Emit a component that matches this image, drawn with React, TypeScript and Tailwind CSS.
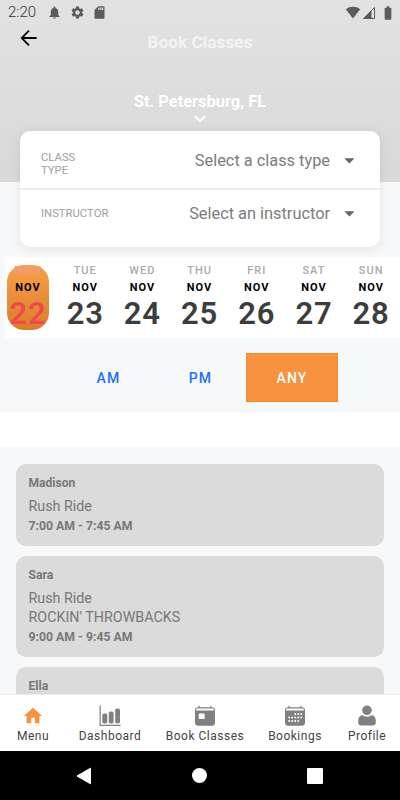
import React from "react";
import { MdNotifications, MdSettings, MdSdCard, MdBatteryFull, MdHome } from "react-icons/md";

const days = [
  ["MON", "22"],
  ["TUE", "23"],
  ["WED", "24"],
  ["THU", "25"],
  ["FRI", "26"],
  ["SAT", "27"],
  ["SUN", "28"],
];

const classes = [
  { who: "Madison", lines: ["Rush Ride"], time: "7:00 AM - 7:45 AM" },
  { who: "Sara", lines: ["Rush Ride", "ROCKIN' THROWBACKS"], time: "9:00 AM - 9:45 AM" },
  { who: "Ella", lines: [], time: "" },
];

function StatusBar() {
  return (
    <div className="flex h-[25px] items-center pl-[8px] pr-[4px] text-[#5b5b5b]">
      <span className="w-[38px] whitespace-nowrap text-[15px] font-light leading-[25px] text-[#333]">2:20</span>
      <MdNotifications className="ml-[1px] size-[15px]" />
      <MdSettings className="ml-[7.5px] size-[15px]" />
      <MdSdCard className="ml-[7.5px] size-[15px]" />
      <div className="ml-auto flex items-center">
        <svg className="h-[14px] w-[16px]" viewBox="0 0 16 14" fill="currentColor">
          <path d="M.8 3.300C4.600 0 11.400 0 15.200 3.300L8 12.500z" />
        </svg>
        <svg className="ml-[1px] h-[14px] w-[14px]" viewBox="0 0 14 14">
          <path d="M12.500 1.500v11h-11z" fill="none" stroke="#5b5b5b" />
          <path d="M9.500 4.500v8h-8z" fill="#5b5b5b" />
        </svg>
        <MdBatteryFull className="ml-[4px] size-[16px]" />
      </div>
    </div>
  );
}

function Field({ label, value, className }: { label: string; value: string; className: string }) {
  return (
    <div className={"flex items-start justify-between pl-[21px] pr-[24px] " + className}>
      <span className="text-[11.3px] leading-[13px] text-[#a0a0a0]">{label}</span>
      <span className="flex items-center text-[16.35px] leading-[20px] text-[#7c7c7c]">
        {value}
        <svg className="ml-[14px] h-[6px] w-[12px]" viewBox="0 0 12 6" fill="#666">
          <path d="M.3 .3h10.200L5.400 5.500z" />
        </svg>
      </span>
    </div>
  );
}

function StatsIcon() {
  return (
    <svg className="size-[22px]" viewBox="0 0 22 22" fill="#808080">
      <path d="M.5.5h1.200v19.200h19.800v1.200H.500z" />
      <rect x="3.300" y="8.500" width="5" height="10" rx="1.800" />
      <rect x="9.800" y="6.500" width="4.800" height="12" rx="1.800" />
      <rect x="16.200" y="3.500" width="4.800" height="15" rx="1.800" />
    </svg>
  );
}

function CalendarIcon({ dots }: { dots?: boolean }) {
  return (
    <svg className="size-[22px]" viewBox="0 0 22 22" fill="#808080">
      <path d="M4.500 .8h1.200v1.500h10.600V.8h1.200v1.500H18c1.700 0 3 1.200 3 2.800v1H1v-1c0-1.600 1.300-2.800 3-2.800h.500z" />
      <path d="M2 5.600V4.900c0-.8.700-1.500 1.500-1.500h15c.8 0 1.500.7 1.500 1.500v.7z" fill="#fff" />
      <path d="M1 6h20v12c0 1.600-1.300 2.700-3 2.700H4c-1.700 0-3-1.100-3-2.700z" />
      {dots ? (
        <g fill="#fff">
          {[
            [12, 9], [15, 9], [18, 9],
            [6, 12.500], [9, 12.500], [12, 12.500], [15, 12.500], [18, 12.500],
            [6, 16], [9, 16], [12, 16], [15, 16],
          ].map(([x, y]) => (
            <circle key={x + "-" + y} cx={x - 0.8} cy={y} r="1" />
          ))}
        </g>
      ) : (
        <rect x="4.700" y="8.500" width="6" height="5.500" rx="1" fill="#fff" />
      )}
    </svg>
  );
}

function ProfileIcon() {
  return (
    <svg className="size-[22px]" viewBox="0 0 22 22" fill="#808080">
      <circle cx="11" cy="5.300" r="4.800" />
      <path d="M6.300 10c2.600 2.300 6.800 2.300 9.400 0 2.600.5 4.100 2.600 4.100 6v1.600c0 1.800-1.200 3-3 3H5.200c-1.800 0-3-1.200-3-3V16c0-3.400 1.500-5.500 4.100-6z" />
    </svg>
  );
}

function Tab({ icon, label, className }: { icon: React.ReactNode; label: string; className: string }) {
  return (
    <div className={"flex flex-none flex-col items-center pt-[10px] " + className}>
      {icon}
      <span className="mt-[1px] whitespace-nowrap text-[12px] leading-[16px] tracking-[0.5px] text-[#444]">{label}</span>
    </div>
  );
}

export default function App() {
  return (
    <div className="flex h-[800px] w-[400px] flex-col overflow-hidden bg-[#f7f8fa] font-['Roboto',sans-serif]">
      <header className="h-[182px] flex-none bg-linear-to-b from-[#e2e2e2] to-[#d9d9d9]">
        <StatusBar />
        <div className="grid grid-cols-[1fr_auto_1fr] items-start">
          <svg className="ml-[20px] mt-[4px] h-[18px] w-[18px]" viewBox="0 0 18 18" fill="none" stroke="black" strokeWidth="1.800">
            <path d="M16.700 9H2M9 1.700 1.700 9 9 16.300" />
          </svg>
          <h1 className="mt-[7px] text-[17.3px] font-bold leading-[20px] text-[#f2f3f7]">Book Classes</h1>
        </div>
        <div className="mt-[40px] flex flex-col items-center text-white">
          <span className="text-[16.4px] font-bold leading-[20px]">St. Petersburg, FL</span>
          <svg className="mt-[2px] h-[9px] w-[14px]" viewBox="0 0 14 9" fill="none" stroke="white" strokeWidth="2">
            <path d="M1.600 1.800 7 7l5.400-5.200" />
          </svg>
        </div>
      </header>

      <section className="z-10 mx-[20px] -mt-[51px] h-[116px] flex-none rounded-[10px] bg-white shadow-[0_2px_12px_rgba(0,0,0,0.09)]">
        <Field label="CLASS TYPE" value="Select a class type" className="h-[59px] border-b-2 border-[#ececee] pt-[20px] [&>span:first-child]:w-[40px]" />
        <Field label="INSTRUCTOR" value="Select an instructor" className="pt-[14px] [&>span:first-child]:mt-[3px]" />
      </section>

      <section className="ml-[5px] mt-[10px] flex h-[81px] flex-none gap-[15.2px] bg-white pl-[2px] pt-[8px]">
        {days.map(([day, date], i) => (
          <div
            key={day}
            className={
              "flex h-[65px] w-[42px] flex-none flex-col items-center rounded-[17px] " +
              (i === 0 ? "bg-linear-to-b from-[#f9a048] to-[#db7c2b]" : "")
            }
          >
            <span className={"-mt-[1px] text-[11px] font-medium leading-[13px] tracking-[1px] " + (i === 0 ? "text-[#f09a91]" : "text-[#aaa]")}>{day}</span>
            <span className="mt-[4px] text-[11px] font-bold leading-[13px] tracking-[1px] text-black">NOV</span>
            <span className={"mt-[2px] text-[31px] font-semibold leading-[36px] tracking-[0.8px] " + (i === 0 ? "text-[#ee4b4b]" : "text-[#3c3d3e]")}>{date}</span>
          </div>
        ))}
      </section>

      <section className="mt-[15px] flex h-[49px] flex-none justify-center text-[14px] font-medium tracking-[1.2px] text-[#1c70fb]">
        <button className="w-[92px] pl-[1px] pt-[1px]">AM</button>
        <button className="w-[92px] pl-[1px] pt-[1px]">PM</button>
        <button className="w-[92px] border border-[#f58a22] bg-[#f79240] pt-[1px] text-white">ANY</button>
      </section>

      <div className="mt-[10px] h-[35px] flex-none bg-white" />

      <main className="flex h-[247px] flex-none flex-col gap-[10px] overflow-hidden px-[16px] pt-[17px]">
        {classes.map((c) => (
          <article key={c.who} className="flex-none rounded-[10px] bg-[#dbdbdb] px-[12.5px] pb-[12px] pt-[11px] text-[#777]">
            <div className="text-[12.1px] font-bold leading-[16px]">{c.who}</div>
            {c.time && (
              <>
                <div className="mt-[6px] text-[14.3px] leading-[19px]">
                  {c.lines.map((line) => (
                    <div key={line}>{line}</div>
                  ))}
                </div>
                <div className="mt-[2px] text-[12.25px] font-bold leading-[16px]">{c.time}</div>
              </>
            )}
          </article>
        ))}
      </main>

      <nav className="flex h-[57px] flex-none border-t border-[#ededed] bg-white">
        <Tab icon={<MdHome className="size-[22px] text-[#f79240]" />} label="Menu" className="w-[66px]" />
        <Tab icon={<StatsIcon />} label="Dashboard" className="w-[88px]" />
        <Tab icon={<CalendarIcon />} label="Book Classes" className="w-[102px]" />
        <Tab icon={<CalendarIcon dots />} label="Bookings" className="w-[78px]" />
        <Tab icon={<ProfileIcon />} label="Profile" className="w-[66px]" />
      </nav>

      <footer className="flex h-[49px] flex-none items-center bg-black pl-[76px]">
        <svg className="h-[18px] w-[16px]" viewBox="0 0 16 18" fill="white">
          <path d="M14.500 1.200v15.600L1 9z" stroke="white" strokeLinejoin="round" />
        </svg>
        <div className="ml-[100px] size-[15px] rounded-full bg-white" />
        <div className="ml-[100px] size-[16px] rounded-[1px] bg-white" />
      </footer>
    </div>
  );
}
